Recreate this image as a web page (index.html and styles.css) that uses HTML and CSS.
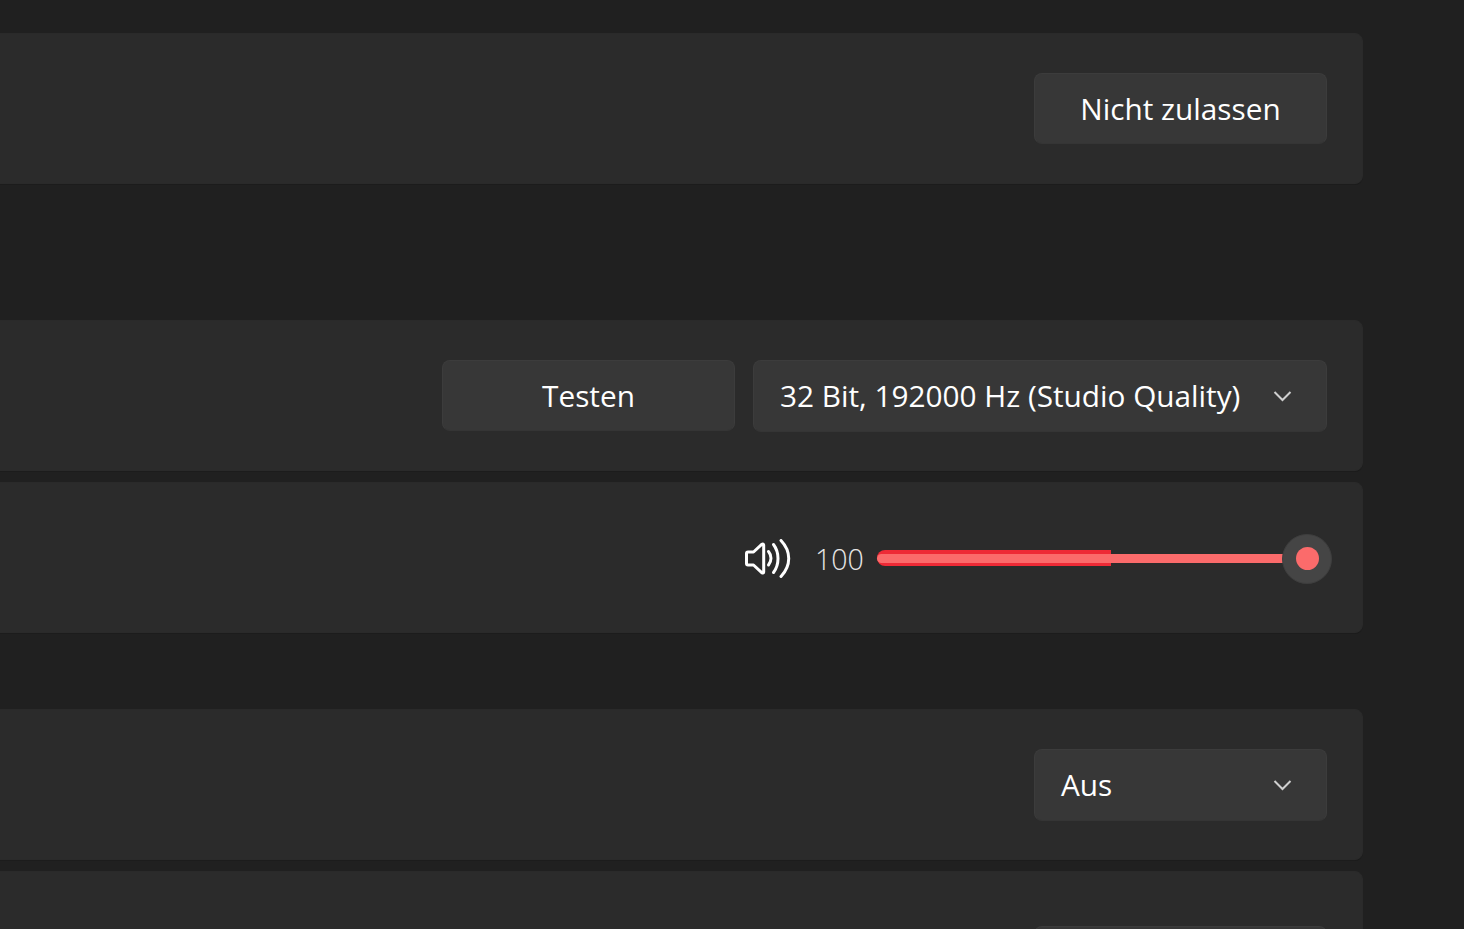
FILE: index.html
```html
<!DOCTYPE html>
<html lang="de">
<head>
<meta charset="utf-8"/>
<title>Sound</title>
<link rel="stylesheet" href="styles.css">
</head>
<body>
<div class="page">
  <section class="group group-first">
    <div class="card">
      <button class="btn btn-wide">Nicht zulassen</button>
    </div>
  </section>

  <section class="group group-format">
    <div class="card">
      <button class="btn btn-wide">Testen</button>
      <div class="btn select select-format">
        <span>32 Bit, 192000 Hz (Studio Quality)</span>
        <svg class="chevron" viewBox="0 0 19 12"><path d="M1.500 2l8 8 8-8"/></svg>
      </div>
    </div>
    <div class="card">
      <div class="volume">
        <svg class="speaker" viewBox="0 0 46 39">
          <path d="M3 13h5.500L17 5.200c.8-.6 1.700-.2 1.700.8v27c0 1-.9 1.400-1.700.8L8.500 26H3c-.8 0-1.500-.7-1.500-1.500v-10C1.500 13.700 2.200 13 3 13z"/>
          <path d="M23.500 12.500c3.300 4 3.300 9.500 0 13.500"/>
          <path d="M28.500 5.500c6 8 6 20 0 28"/>
          <path d="M36 1.500c10.300 11 10.300 25 0 36"/>
        </svg>
        <span class="volume-value">100</span>
        <div class="slider">
          <div class="slider-peak"></div>
          <div class="slider-track"></div>
          <div class="slider-thumb"><div class="slider-dot"></div></div>
        </div>
      </div>
    </div>
  </section>

  <section class="group group-enhance">
    <div class="card">
      <div class="btn select select-short">
        <span>Aus</span>
        <svg class="chevron" viewBox="0 0 19 12"><path d="M1.500 2l8 8 8-8"/></svg>
      </div>
    </div>
    <div class="card card-cut">
      <div class="btn select select-short"></div>
    </div>
  </section>
</div>
</body>
</html>
```

FILE: styles.css
```css
html, body {
    margin: 0;
    padding: 0;
    height: 100%;
    overflow: hidden;
    background: #202020;
}

body {
    font-family: "Open Sans", "Noto Sans", sans-serif;
    color: #ffffff;
}

.page {
    box-sizing: border-box;
    height: 929px;
    overflow: hidden;
    margin-left: -20px;
    margin-right: 101px;
    padding-top: 33px;
}

.group {
    display: flex;
    flex-direction: column;
    gap: 11px;
}

.group-format { margin-top: 136px; }
.group-enhance { margin-top: 76px; }

.card {
    box-sizing: border-box;
    height: 151px;
    padding: 0 35px 0 0;
    display: flex;
    align-items: center;
    justify-content: flex-end;
    gap: 18px;
    background: #2b2b2b;
    border: 1px solid #2a2a2a;
    box-shadow: 0 1px 0 #1c1c1c;
    border-radius: 8px;
}

.card-cut {
    align-items: flex-start;
    padding-top: 54px;
    height: 200px;
}

.btn {
    box-sizing: border-box;
    height: 72px;
    flex: none;
    display: flex;
    align-items: center;
    justify-content: center;
    padding: 0;
    font-family: inherit;
    font-size: 29.75px;
    color: #ffffff;
    background: #373737;
    border: 1px solid #3c3c3c;
    border-bottom-color: #353535;
    border-radius: 8px;
}

.btn-wide { width: 293px; height: 71px; }

.select { justify-content: space-between; padding: 0 34px 0 26px; }
.select-format { width: 574px; }
.select-short { width: 293px; }

.chevron {
    width: 19px;
    height: 12px;
    fill: none;
    stroke: #cfcfcf;
    stroke-width: 2;
}

.volume {
    display: flex;
    align-items: center;
    margin-right: -5px;
    margin-top: 2px;
}

.speaker {
    width: 46px;
    height: 39px;
    fill: none;
    stroke: #ffffff;
    stroke-width: 3;
    stroke-linecap: round;
    stroke-linejoin: round;
}

.volume-value {
    margin-left: 24px;
    width: 62px;
    font-size: 28.5px;
    font-weight: 300;
    color: #e6e6e6;
}

.slider {
    position: relative;
    width: 455px;
    height: 50px;
}

.slider-peak {
    position: absolute;
    left: 0;
    top: 16px;
    width: 234px;
    height: 16px;
    background: #ee2a36;
    border-radius: 8px 0 0 8px;
}

.slider-track {
    position: absolute;
    left: 0;
    right: 48px;
    top: 20px;
    height: 9px;
    background: #fb6b6b;
    border-radius: 5px 0 0 5px;
}

.slider-thumb {
    position: absolute;
    right: 0;
    top: 0;
    box-sizing: border-box;
    width: 50px;
    height: 50px;
    display: flex;
    align-items: center;
    justify-content: center;
    background: #454545;
    border: 1px solid #3e3e3e;
    border-radius: 50%;
}

.slider-dot {
    width: 23px;
    height: 23px;
    background: #fb6b6b;
    border-radius: 50%;
}
```
